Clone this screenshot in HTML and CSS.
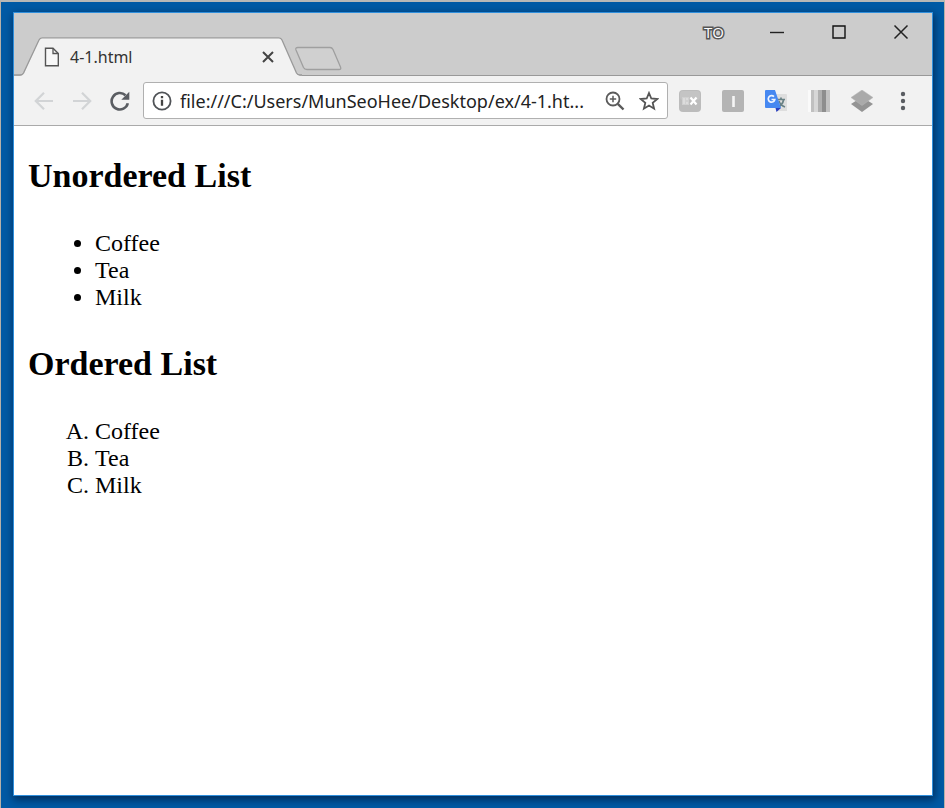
FILE: index.html
```html
<!DOCTYPE html>
<html lang="en">
<head>
<meta charset="utf-8">
<title>4-1.html</title>
<link rel="stylesheet" href="styles.css">
</head>
<body>
<div class="desktop">
  <div class="window">
    <header class="titlebar">
      <div class="tab">
        <svg class="tab-shape" width="288" height="39" viewBox="0 0 288 39" aria-hidden="true">
          <path d="M0 38.500H7Q9 38.500 10 36.500L25 3Q26 .500 28 .500H265Q267 .500 268 3L283 36.500Q284 38.500 286 38.500H288V39H0Z" fill="#f2f2f2"/>
          <path d="M0 38H6Q8.500 38 9.500 36L25 3Q26 .800 28 .800H265Q267 .800 268 3L282.500 36Q283.500 38 286 38H288" fill="none" stroke="#999" stroke-width="1.300"/>
        </svg>
        <svg class="tab-file" width="16" height="20" viewBox="0 0 16 20" aria-hidden="true">
          <path d="M1.500 1.200H9L14.300 6.500V18.800H1.500Z" fill="#f8f8f8" stroke="#555" stroke-width="1.400"/>
          <path d="M9 1.200V6.500H14.300" fill="none" stroke="#555" stroke-width="1.300"/>
        </svg>
        <span class="tab-title">4-1.html</span>
        <button class="tab-close" aria-label="Close tab">
          <svg width="14" height="14" viewBox="0 0 14 14"><path d="M2 2L12 12M12 2L2 12" stroke="#444" stroke-width="2"/></svg>
        </button>
      </div>
      <button class="new-tab" aria-label="New tab">
        <svg width="48" height="26" viewBox="0 0 48 26"><path d="M4 1.500H36Q38 1.500 39 3.500L46.500 21Q47.500 23.500 45 23.500H13Q10.500 23.500 9.500 21.500L2 4Q1 1.500 4 1.500Z" fill="#d0d0d0" stroke="#9f9f9f" stroke-width="1.300"/></svg>
      </button>
      <div class="controls">
        <button class="user" aria-label="User TO">
          <svg width="30" height="30" viewBox="0 0 30 30"><text class="user-text" x="15" y="21" text-anchor="middle">TO</text></svg>
        </button>
        <button aria-label="Minimize"><svg width="16" height="16" viewBox="0 0 16 16"><path d="M1 8.500H15" stroke="#222" stroke-width="1.400"/></svg></button>
        <button aria-label="Maximize"><svg width="16" height="16" viewBox="0 0 16 16"><path d="M2 2H14V14H2Z" fill="none" stroke="#111" stroke-width="1.400"/></svg></button>
        <button aria-label="Close window"><svg width="16" height="16" viewBox="0 0 16 16"><path d="M1.500 1.500L14.500 14.500M14.500 1.500L1.500 14.500" stroke="#222" stroke-width="1.500"/></svg></button>
      </div>
    </header>

    <nav class="toolbar">
      <div class="nav-buttons">
        <button aria-label="Back" disabled><svg width="20" height="20" viewBox="0 0 20 20"><path d="M19 10H2M10 1.800L1.800 10L10 18.200" fill="none" stroke="#d2d4d6" stroke-width="2.200"/></svg></button>
        <button aria-label="Forward" disabled><svg width="20" height="20" viewBox="0 0 20 20"><path d="M1 10H18M10 1.800L18.200 10L10 18.200" fill="none" stroke="#d2d4d6" stroke-width="2.200"/></svg></button>
        <button aria-label="Reload"><svg width="20" height="20" viewBox="0 0 20 20"><path d="M17.800 12.200A8.200 8.200 0 1 1 15.500 4.300" fill="none" stroke="#5a5d62" stroke-width="2.600"/><path d="M19.300 .800V8.800H11.300Z" fill="#5a5d62"/></svg></button>
      </div>
      <div class="address">
        <svg width="20" height="20" viewBox="0 0 20 20" aria-hidden="true"><circle cx="10" cy="10" r="8.600" fill="none" stroke="#505357" stroke-width="1.800"/><path d="M10 8.800V14.800M10 5V7.200" stroke="#444" stroke-width="2.300"/></svg>
        <input type="text" aria-label="Address" value="file:///C:/Users/MunSeoHee/Desktop/ex/4-1.ht...">
        <button aria-label="Zoom"><svg width="20" height="20" viewBox="0 0 20 20"><circle cx="8" cy="8" r="6.500" fill="none" stroke="#5a5a5a" stroke-width="1.800"/><path d="M12.800 12.800L18.500 18.500" stroke="#5a5a5a" stroke-width="2.400"/><path d="M8 4.800V11.200M4.800 8H11.200" stroke="#5a5a5a" stroke-width="1.500"/></svg></button>
        <button aria-label="Bookmark"><svg width="20" height="20" viewBox="0 0 20 20"><path d="M10 2L12.300 7.500L18.300 8L13.700 11.900L15.100 17.700L10 14.600L4.900 17.700L6.300 11.900L1.700 8L7.700 7.500Z" fill="none" stroke="#555" stroke-width="1.800"/></svg></button>
      </div>
      <div class="extensions">
        <button aria-label="EX extension"><svg width="22" height="22" viewBox="0 0 22 22"><rect width="22" height="22" rx="4" fill="#bcbcbc"/><rect x="1" y="1" width="20" height="9" rx="3" fill="#c4c4c4"/><rect x="3" y="7" width="7" height="8" fill="#d0d0d0"/><path d="M4 8H6V14H4ZM7 8H9V10H7ZM7 12H9V14H7Z" fill="#dcdcdc"/><path d="M11.500 7.500L17.500 14.500M17.500 7.500L11.500 14.500" stroke="#fff" stroke-width="2.200"/></svg></button>
        <button aria-label="I extension"><svg width="22" height="22" viewBox="0 0 22 22"><rect width="22" height="22" rx="2" fill="#b4b4b4"/><path d="M11.500 6V17" stroke="#f5f5f5" stroke-width="2.600"/></svg></button>
        <button aria-label="Translate"><svg width="22" height="22" viewBox="0 0 22 22"><path d="M8 4H21Q22 4 22 5V21H12Z" fill="#dedede"/><path d="M12 9.500H20M16 7.500V9.500M18.500 10C18 13 16 15.500 13 17M14 11C15 14 17 16 20 17" fill="none" stroke="#688185" stroke-width="1.700"/><path d="M1 0H10L16 18H1Q0 18 0 17V1Q0 0 1 0Z" fill="#4688f1"/><path d="M10.500 18H16L11.500 22Z" fill="#2a3fbf"/><path d="M9 6.600A3.300 3.300 0 1 0 9.800 9.500H6.500" fill="none" stroke="#eef4ff" stroke-width="1.700"/></svg></button>
        <button aria-label="Bars extension"><svg width="22" height="22" viewBox="0 0 22 22"><path d="M0 0H3V22H0Z" fill="#fafafa"/><path d="M3 0H6V22H3Z" fill="#c0c0c0"/><path d="M6 0H10V22H6Z" fill="#d7d7d7"/><path d="M10 0H14V22H10Z" fill="#b0b0b0"/><path d="M14 0H18V22H14Z" fill="#8e8e8e"/><path d="M18 0H22V22H18Z" fill="#c2c2c2"/></svg></button>
        <button aria-label="Layers extension"><svg width="22" height="22" viewBox="0 0 22 22"><path d="M11 7L22 14L11 22L0 14Z" fill="#949494"/><path d="M11 0L22 7.500L11 15.500L0 7.500Z" fill="#aaa" stroke="#b8b8b8" stroke-width=".5"/></svg></button>
        <button class="menu" aria-label="Menu"><svg width="6" height="20" viewBox="0 0 6 20"><g fill="#5a5d62"><circle cx="3" cy="3" r="2.200"/><circle cx="3" cy="10" r="2.200"/><circle cx="3" cy="17" r="2.200"/></g></svg></button>
      </div>
    </nav>

    <main class="page">
      <h2>Unordered List</h2>
      <ul>
        <li>Coffee</li>
        <li>Tea</li>
        <li>Milk</li>
      </ul>
      <h2>Ordered List</h2>
      <ol type="A">
        <li>Coffee</li>
        <li>Tea</li>
        <li>Milk</li>
      </ol>
    </main>
  </div>
</div>
</body>
</html>
```
FILE: styles.css
```css
* {
  box-sizing: border-box;
}

body {
  margin: 0;
}

button {
  display: flex;
  align-items: center;
  justify-content: center;
  padding: 0;
  border: 0;
  background: none;
}

svg {
  display: block;
  flex: none;
}

.desktop {
  display: flex;
  min-height: 100vh;
  padding: 10px 11px 12px 12px;
  border: 1px solid #b5b0a8;
  border-top: 2px solid #b8b8b6;
  border-bottom: 0;
  background: #005aa5;
}

.window {
  display: flex;
  flex: 1;
  flex-direction: column;
  min-width: 0;
  border: 1px solid #2f8fdc;
  background: #fff;
  box-shadow: 1px 3px 8px 1px rgba(0, 20, 50, 0.6);
}

.titlebar {
  display: flex;
  align-items: flex-end;
  height: 63px;
  background: #ccc linear-gradient(#999, #999) bottom / 100% 1px no-repeat;
}

.tab {
  position: relative;
  display: flex;
  align-items: center;
  width: 288px;
  height: 39px;
  padding: 0 27px 0 30px;
}

.tab-shape {
  position: absolute;
  inset: 0;
}

.tab-file,
.tab-title,
.tab-close {
  position: relative;
}

.tab-title {
  flex: 1;
  margin-left: 10px;
  font: 16px/24px "Noto Sans", sans-serif;
  color: #333;
}

.new-tab {
  align-self: flex-end;
  margin-left: -8px;
  margin-bottom: 4px;
}

.controls {
  display: flex;
  align-self: flex-start;
  gap: 46px;
  height: 38px;
  margin-left: auto;
  padding-right: 23px;
}

.user {
  margin-right: -6px;
}

.user-text {
  font: 15px "Open Sans", sans-serif;
  fill: #fff;
  stroke: #555;
  stroke-width: 3px;
  paint-order: stroke;
}

.toolbar {
  display: flex;
  align-items: center;
  height: 50px;
  padding: 0 26px 0 20px;
  border-bottom: 1px solid #aaa;
  background: #f2f2f2;
}

.nav-buttons {
  display: flex;
  gap: 18px;
}

.address {
  display: flex;
  flex: 1;
  align-items: center;
  gap: 14px;
  min-width: 0;
  height: 37px;
  margin: 0 11px 0 13px;
  padding: 0 8px;
  border: 1px solid #b0b0b0;
  border-radius: 3px;
  background: #fff;
}

.address input {
  flex: 1;
  min-width: 0;
  margin-left: -6px;
  padding: 0;
  border: 0;
  background: none;
  font: 18px/28px "Noto Sans", sans-serif;
  color: #222;
}

.extensions {
  display: flex;
  align-items: center;
  gap: 21px;
}

.menu {
  margin-left: 6px;
}

.page {
  flex: 1;
  padding: 30px 14px;
  font: 24px/27px "Liberation Serif", serif;
  font-variant-ligatures: none;
  color: #000;
}

.page h2 {
  margin: 0 0 34px;
  font-size: 34px;
  line-height: 40px;
}

.page ul,
.page ol {
  margin: 0 0 33px;
  padding-left: 67px;
}
```
